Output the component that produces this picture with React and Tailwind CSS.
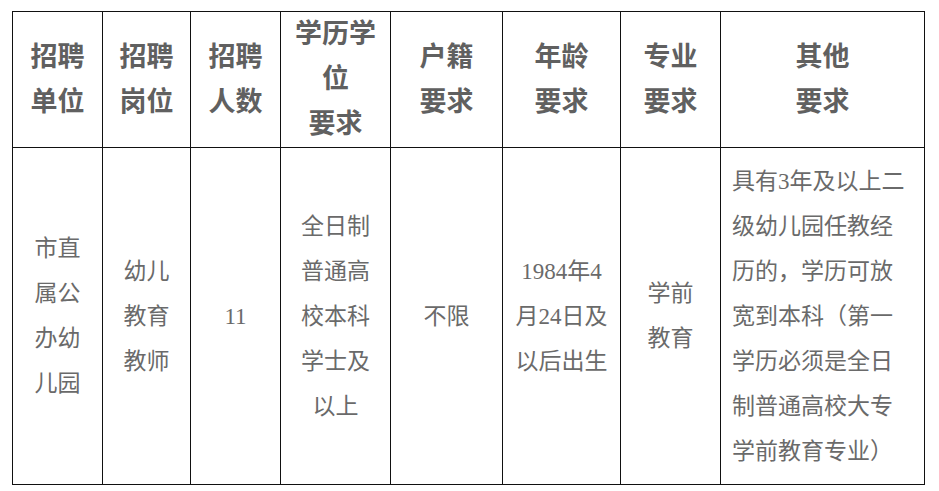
import React from 'react';

const cols = [90, 88, 90, 110, 112, 118, 100, 204];

const head = [
  ['招聘', '单位'],
  ['招聘', '岗位'],
  ['招聘', '人数'],
  ['学历学', '位', '要求'],
  ['户籍', '要求'],
  ['年龄', '要求'],
  ['专业', '要求'],
  ['其他', '要求'],
];

const body = [
  ['市直', '属公', '办幼', '儿园'],
  ['幼儿', '教育', '教师'],
  ['11'],
  ['全日制', '普通高', '校本科', '学士及', '以上'],
  ['不限'],
  ['1984年4', '月24日及', '以后出生'],
  ['学前', '教育'],
];

const other = ['具有3年及以上二', '级幼儿园任教经', '历的，学历可放', '宽到本科（第一', '学历必须是全日', '制普通高校大专', '学前教育专业）'];

function Lines({ lines }) {
  return lines.map((l, i) => <div key={i}>{l}</div>);
}

export default function App() {
  return (
    <div className="w-[939px] h-[491px] bg-white pt-[11px] pl-[12px] font-['Liberation_Serif','Noto_Sans_CJK_SC',serif]">
      <table className="border-collapse table-fixed">
        <colgroup>
          {cols.map((w, i) => (
            <col key={i} style={{ width: w }} />
          ))}
        </colgroup>
        <tbody>
          <tr className="h-[136px]">
            {head.map((h, i) => (
              <td key={i} className="border border-[#111] text-center align-middle text-[27px] leading-[45px] font-bold text-[#606060] p-0">
                <Lines lines={h} />
              </td>
            ))}
          </tr>
          <tr className="h-[337px]">
            {body.map((b, i) => (
              <td key={i} className="border border-[#111] text-center align-middle text-[23px] leading-[45px] text-[#6a6a6a] p-0 whitespace-nowrap">
                <Lines lines={b} />
              </td>
            ))}
            <td className="border border-[#111] text-left align-middle text-[23px] leading-[45px] text-[#6a6a6a] pl-[11px] pr-0 py-0 whitespace-nowrap">
              <Lines lines={other} />
            </td>
          </tr>
        </tbody>
      </table>
    </div>
  );
}
